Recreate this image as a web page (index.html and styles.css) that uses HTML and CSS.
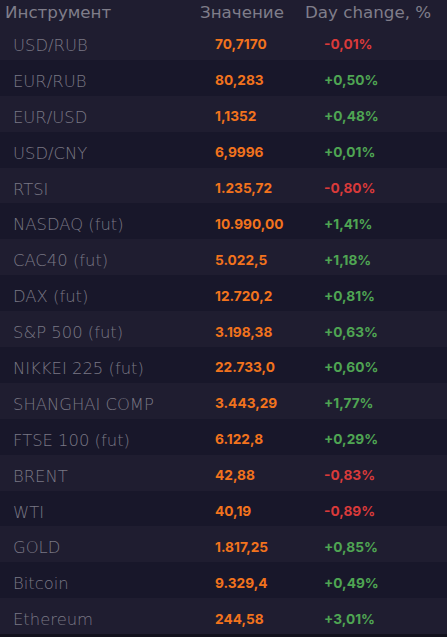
FILE: index.html
```html
<!DOCTYPE html>
<html lang="ru">
<head>
<meta charset="utf-8">
<link rel="stylesheet" href="styles.css">
</head>
<body>
<div class="table">
  <div class="head">
    <span class="h-name">Инструмент</span>
    <span class="h-val">Значение</span>
    <span class="h-chg">Day change, %</span>
  </div>
  <div class="row"><span class="name">USD/RUB</span><span class="val">70,7170</span><span class="chg down">-0,01%</span></div>
  <div class="row"><span class="name">EUR/RUB</span><span class="val">80,283</span><span class="chg up">+0,50%</span></div>
  <div class="row"><span class="name">EUR/USD</span><span class="val">1,1352</span><span class="chg up">+0,48%</span></div>
  <div class="row"><span class="name">USD/CNY</span><span class="val">6,9996</span><span class="chg up">+0,01%</span></div>
  <div class="row"><span class="name">RTSI</span><span class="val">1.235,72</span><span class="chg down">-0,80%</span></div>
  <div class="row"><span class="name">NASDAQ (fut)</span><span class="val">10.990,00</span><span class="chg up">+1,41%</span></div>
  <div class="row"><span class="name">CAC40 (fut)</span><span class="val">5.022,5</span><span class="chg up">+1,18%</span></div>
  <div class="row"><span class="name">DAX (fut)</span><span class="val">12.720,2</span><span class="chg up">+0,81%</span></div>
  <div class="row"><span class="name">S&amp;P 500 (fut)</span><span class="val">3.198,38</span><span class="chg up">+0,63%</span></div>
  <div class="row"><span class="name">NIKKEI 225 (fut)</span><span class="val">22.733,0</span><span class="chg up">+0,60%</span></div>
  <div class="row"><span class="name">SHANGHAI COMP</span><span class="val">3.443,29</span><span class="chg up">+1,77%</span></div>
  <div class="row"><span class="name">FTSE 100 (fut)</span><span class="val">6.122,8</span><span class="chg up">+0,29%</span></div>
  <div class="row"><span class="name">BRENT</span><span class="val">42,88</span><span class="chg down">-0,83%</span></div>
  <div class="row"><span class="name">WTI</span><span class="val">40,19</span><span class="chg down">-0,89%</span></div>
  <div class="row"><span class="name">GOLD</span><span class="val">1.817,25</span><span class="chg up">+0,85%</span></div>
  <div class="row"><span class="name">Bitcoin</span><span class="val">9.329,4</span><span class="chg up">+0,49%</span></div>
  <div class="row"><span class="name">Ethereum</span><span class="val">244,58</span><span class="chg up">+3,01%</span></div>
</div>
</body>
</html>
```
FILE: styles.css
```css
html, body {
  margin: 0;
  padding: 0;
  background: #12111d;
}
.table {
  width: 447px;
  display: flex;
  flex-direction: column;
}
.head {
  height: 24px;
  background: #1f1d30;
  display: grid;
  grid-template-columns: 195px 105px 1fr;
  align-items: center;
  padding-left: 5px;
  font-family: "DejaVu Sans", sans-serif;
  font-size: 16.7px;
  color: #7f7d8a;
}
.row {
  height: 35.9px;
  display: grid;
  grid-template-columns: 202px 109px 1fr;
  align-items: center;
  padding-left: 13px;
  padding-top: 5px;
  box-sizing: border-box;
  background: #1f1d30;
}
.row:nth-child(odd) {
  background: #18172a;
}
.name {
  font-family: "DejaVu Sans", sans-serif;
  font-weight: 200;
  font-size: 16.4px;
  color: #7a7885;
  padding-top: 2px;
}
.val, .chg {
  font-family: Inter, sans-serif;
  font-weight: 700;
  font-size: 13.7px;
}
.val { color: #f2731d; }
.up { color: #4fa553; }
.down { color: #d93a3a; }
```
